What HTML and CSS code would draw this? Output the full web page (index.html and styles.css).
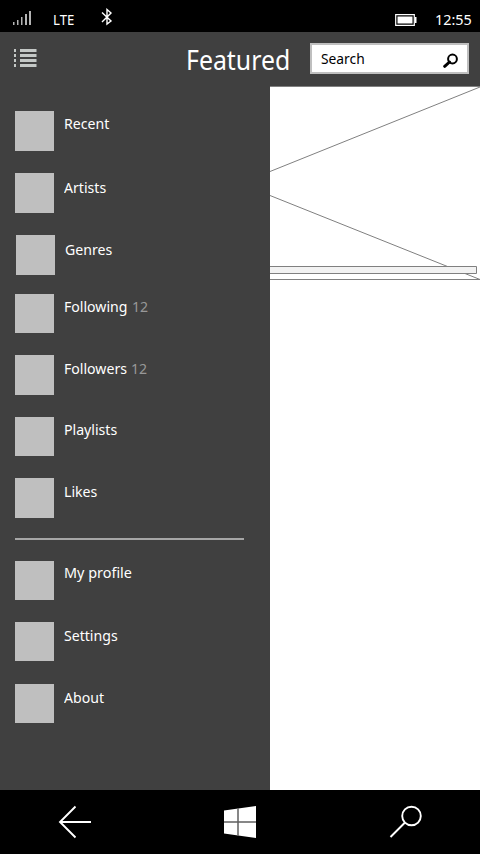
FILE: index.html
```html
<!DOCTYPE html>
<html lang="en">
<head>
<meta charset="utf-8">
<title>Featured</title>
<link rel="stylesheet" href="styles.css">
</head>
<body>
<div class="phone">
  <div class="status">
    <svg class="signal" width="20" height="17" viewBox="0 0 20 17" fill="#b4b4b4"><path d="M0 13h1.5v3H0zM4 11h1.5v5H4zM8 8h1.500v8H8zM12 5h2v11h-2zM16 2h2v14h-2z"/></svg>
    <span class="lte">LTE</span>
    <svg class="bluetooth" width="12" height="18" viewBox="0 0 12 18" fill="none" stroke="#fff" stroke-width="1.400"><path d="M1 4.500 10 13 6 16V1.500L10 5 1 14"/></svg>
    <svg class="battery" width="22" height="12" viewBox="0 0 22 12"><path d="M.7.7h18.600v10.600H.7z" fill="none" stroke="#fff" stroke-width="1.200"/><path d="M2.500 2.500h15v7h-15z" fill="#fff"/><path d="M20 3h1.500v6H20z" fill="#fff"/></svg>
    <span class="clock">12:55</span>
  </div>
  <header class="header">
    <svg class="menu-icon" width="23" height="19" viewBox="0 0 23 19" fill="#c4c8c6"><path d="M0 0h2v3H0zM0 5h2v3H0zM0 10h2v3H0zM0 15h2v3H0zM6 0h16.500v3H6zM6 5h16.500v3H6zM6 10h16.500v3H6zM6 15h16.500v3H6z"/></svg>
    <h1 class="title">Featured</h1>
    <div class="search">
      <span class="search-label">Search</span>
      <svg class="search-icon" width="16" height="16" viewBox="0 0 16 16" fill="none" stroke="#000"><circle cx="9.500" cy="6" r="4.400" stroke-width="2"/><path d="M6.500 9 1.700 13.300" stroke-width="3" stroke-linecap="round"/></svg>
    </div>
  </header>
  <div class="content">
    <nav class="drawer">
      <a class="item recent"><i class="tile tall"></i><span class="label">Recent</span></a>
      <a class="item artists"><i class="tile tall"></i><span class="label">Artists</span></a>
      <a class="item genres"><i class="tile tall"></i><span class="label">Genres</span></a>
      <a class="item following"><i class="tile"></i><span class="label">Following</span><span class="count">12</span></a>
      <a class="item followers"><i class="tile tall"></i><span class="label">Followers</span><span class="count">12</span></a>
      <a class="item playlists"><i class="tile"></i><span class="label">Playlists</span></a>
      <a class="item likes"><i class="tile tall"></i><span class="label">Likes</span></a>
      <div class="divider"></div>
      <a class="item profile"><i class="tile"></i><span class="label">My profile</span></a>
      <a class="item settings"><i class="tile"></i><span class="label">Settings</span></a>
      <a class="item about"><i class="tile"></i><span class="label">About</span></a>
    </nav>
    <main class="page">
      <svg width="210" height="200" viewBox="0 0 210 200" fill="none" stroke="#808080"><path d="M0 .5h210M0 193.500h210"/><path d="M0 85.500 210 1M0 109.500 210 193.500"/><path d="M-1 180.500h207.500v7H-1z" fill="#f2f2f2"/></svg>
    </main>
  </div>
  <footer class="navbar">
    <svg class="back" width="34" height="34" viewBox="0 0 34 34" fill="none" stroke="#fff" stroke-width="1.900"><path d="M17.500 1.500 2 17l15.500 15.500M2 17h31"/></svg>
    <svg class="windows" width="32" height="32" viewBox="0 0 32 32"><path d="M0 4.500 32 0v32L0 27.500z" fill="#fff"/><path d="M0 16h32M14 2v28" stroke="#606060" stroke-width="1.500" fill="none"/></svg>
    <svg class="find" width="34" height="34" viewBox="0 0 34 34" fill="none" stroke="#fff" stroke-width="1.900"><circle cx="22.500" cy="11" r="9.300"/><path d="M16 17.500 1.500 32"/></svg>
  </footer>
</div>
</body>
</html>
```

FILE: styles.css
```css
* { box-sizing: border-box; }
body { margin: 0; font-family: "Noto Sans", "Open Sans", sans-serif; background: #fff; }
.phone { width: 480px; height: 854px; display: flex; flex-direction: column; overflow: hidden; }
svg { display: block; flex: none; }

.status { height: 32px; background: #000; color: #fff; display: flex; align-items: flex-start; flex: none; padding-left: 13px; }
.signal { margin-top: 9px; }
.lte { margin: 10px 0 0 20px; width: 21px; font-size: 14px; line-height: 20px; transform: scaleX(.94); transform-origin: 0 0; }
.bluetooth { margin: 8px 0 0 27px; }
.battery { margin: 14px 0 0 auto; }
.clock { margin: 9px 0 0 18px; width: 45px; font-size: 15px; line-height: 20px; transform: scaleX(.96); transform-origin: 0 0; }

.header { height: 54px; background: #404040; color: #fff; display: flex; align-items: flex-start; flex: none; padding-left: 14px; }
.menu-icon { margin-top: 17px; }
.title { margin: 9px 0 0 149px; width: 124px; font-size: 27px; line-height: 38px; font-weight: 400; white-space: nowrap; transform: scaleX(.92); transform-origin: 0 0; }
.search { width: 159px; height: 31px; margin-top: 11px; border: 2px solid #bfbfbf; background: #fff; color: #000; display: flex; justify-content: space-between; padding: 3px 8px 0 9px; }
.search-label { font-size: 15px; line-height: 20px; transform: scaleX(.92); transform-origin: 0 0; }
.search-icon { margin-top: 5px; }

.content { height: 704px; display: flex; flex: none; }
.drawer { width: 270px; background: #404040; padding: 25px 0 0 15px; }
.page { width: 210px; background: #fff; }
.item { display: flex; color: #fff; font-size: 15px; line-height: 20px; height: 40px; white-space: nowrap; }
.tile { width: 39px; height: 39px; background: #bfbfbf; margin-right: 10px; flex: none; }
.tile.tall { height: 40px; }
.label, .count { padding-top: 3px; transform: scaleX(.94); transform-origin: 0 0; }
.count { color: #989898; }
.artists, .genres { margin-top: 22px; }
.genres { margin-left: 1px; }
.following { margin-top: 19px; }
.followers { margin-top: 21px; }
.playlists { margin-top: 22px; }
.likes { margin-top: 21px; }
.divider { width: 229px; height: 2px; background: #a6a6a6; margin: 20px 0 21px; }
.settings { margin-top: 21px; }
.about { margin-top: 22px; }
.recent .label, .following span, .playlists .label { padding-top: 2px; }
.artists .label, .genres .label { padding-top: 4px; }
.profile .label { padding-top: 1px; transform: scaleX(.96); }

.navbar { height: 64px; background: #000; flex: none; display: flex; align-items: flex-start; padding-left: 58px; }
.back { margin-top: 15px; }
.windows { margin: 16px 0 0 132px; }
.find { margin: 15px 0 0 133px; }
```
